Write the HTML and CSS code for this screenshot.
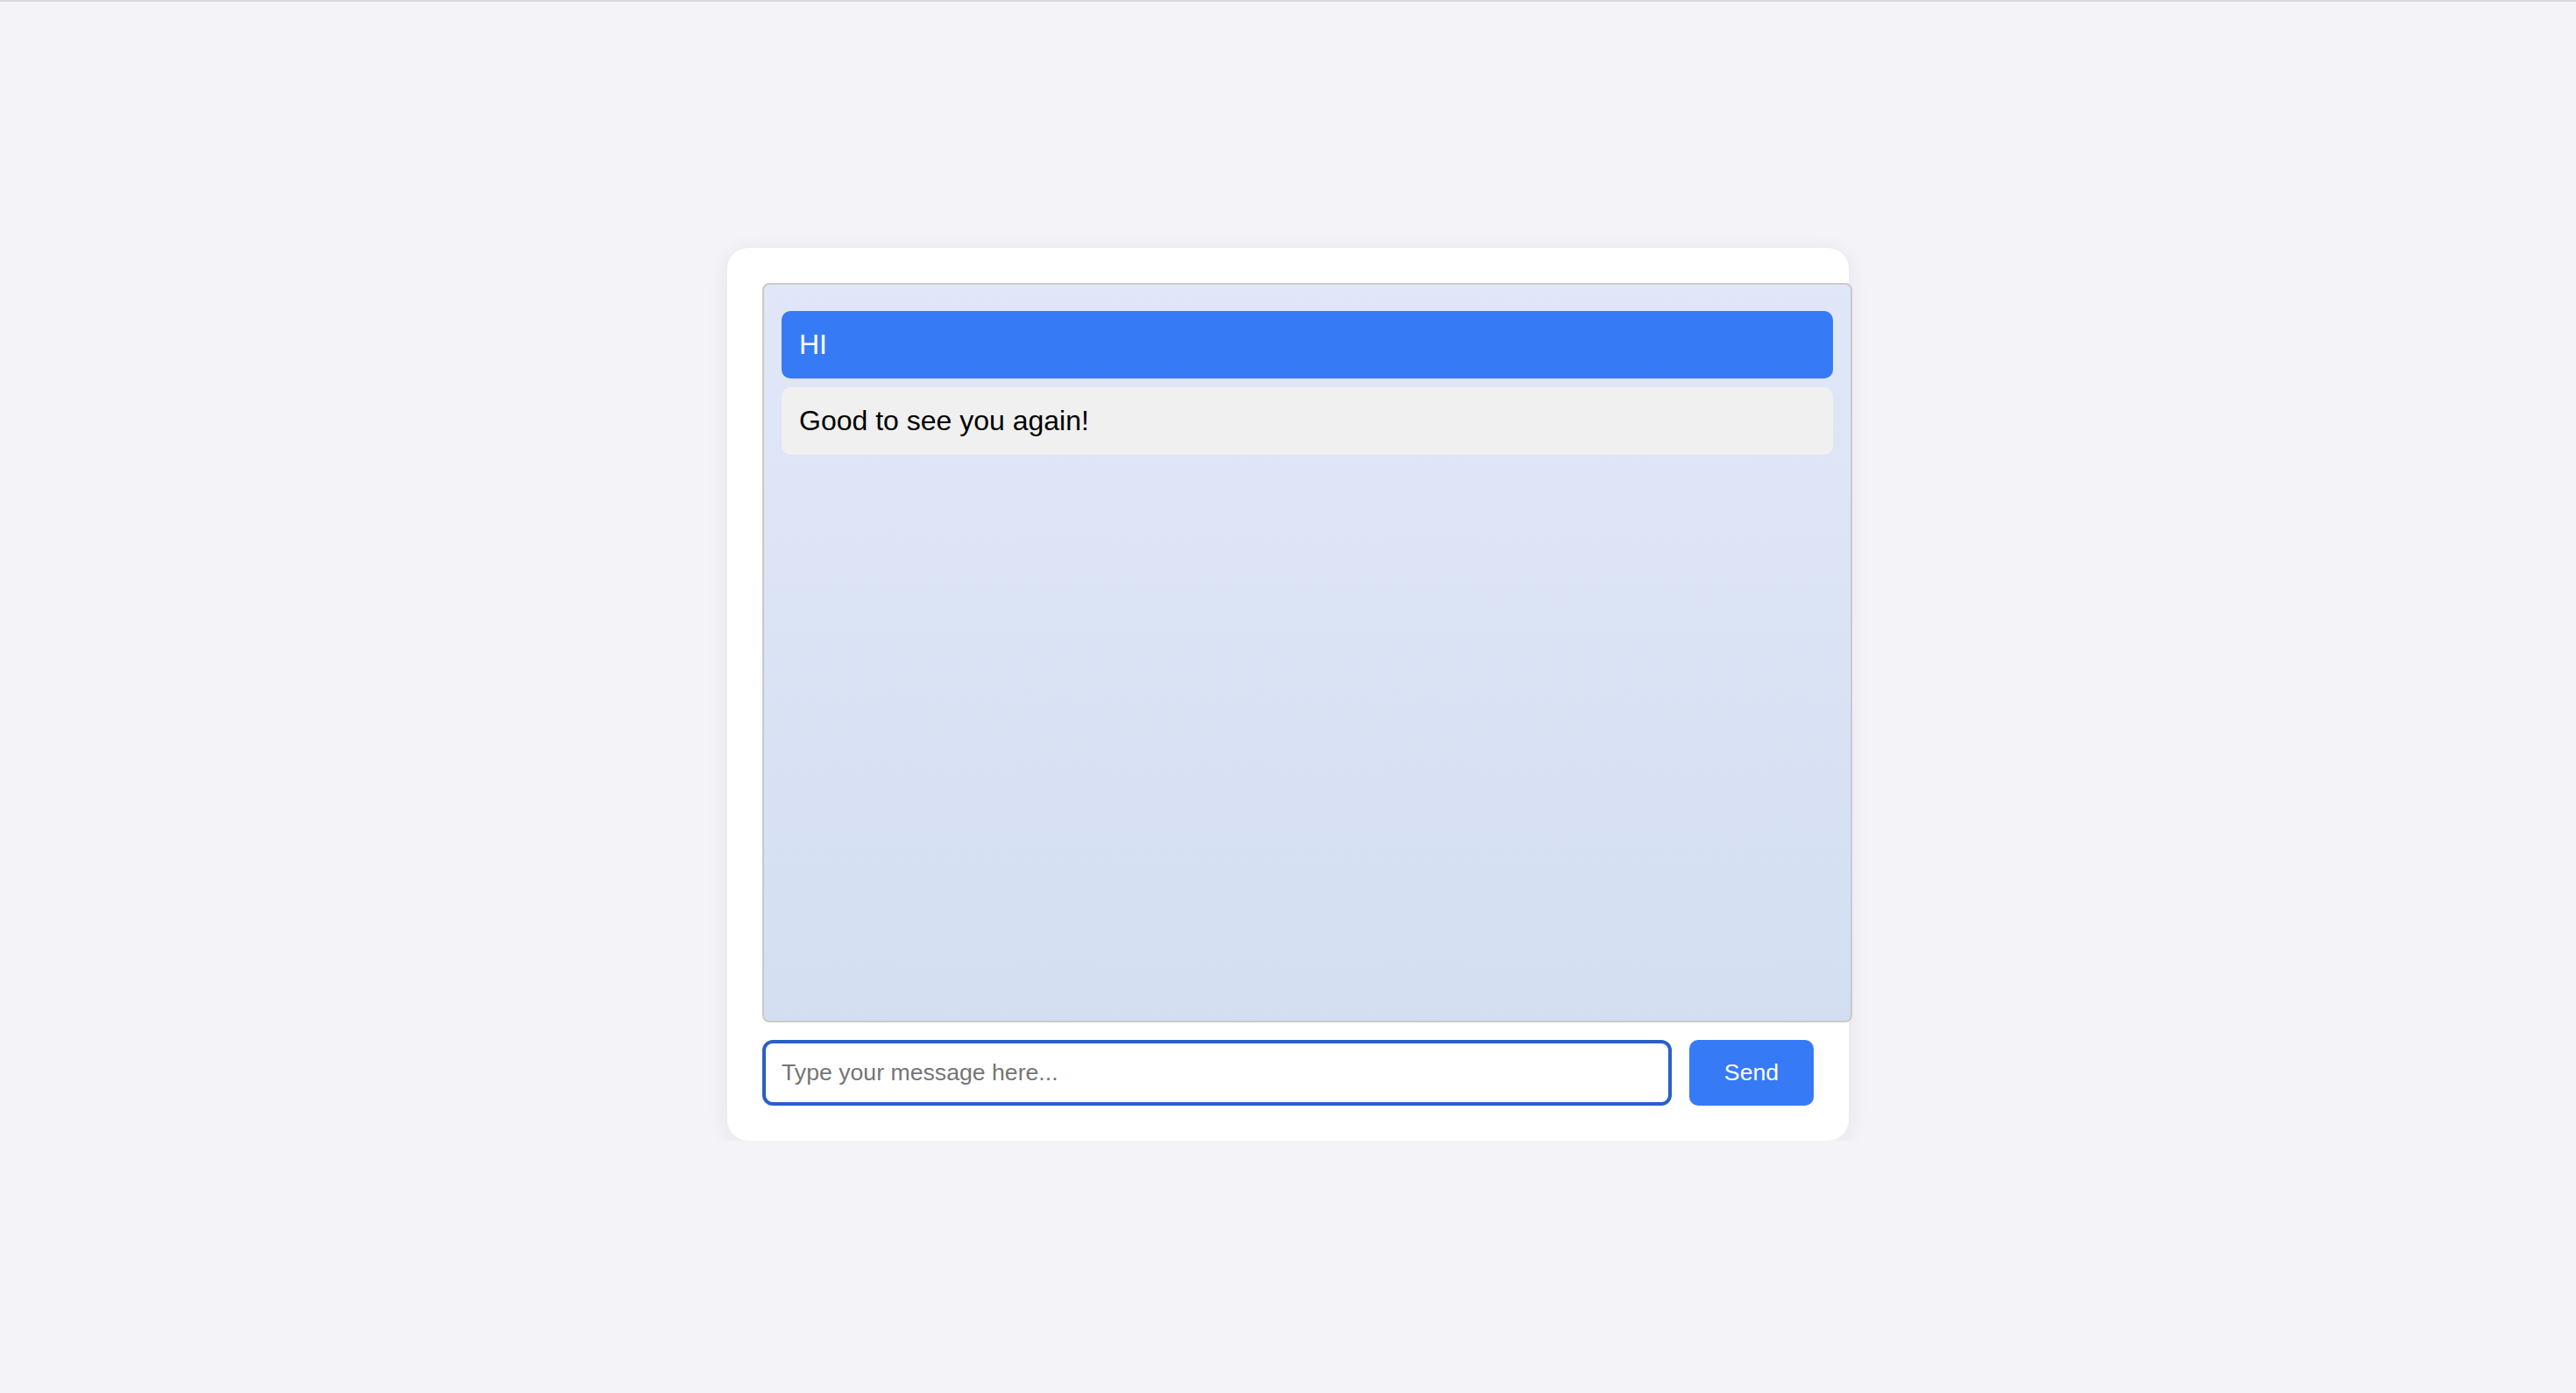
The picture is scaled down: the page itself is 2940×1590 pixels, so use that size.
FILE: index.html
```html
<!DOCTYPE html>
<html lang="en">
<head>
<meta charset="utf-8">
<title>Chat</title>
<link rel="stylesheet" href="styles.css">
</head>
<body>
  <div class="topline"></div>
  <main class="page">
    <section class="card">
      <div class="chat">
        <div class="msg msg-user">HI</div>
        <div class="msg msg-bot">Good to see you again!</div>
      </div>
      <form class="composer">
        <input class="input" type="text" placeholder="Type your message here...">
        <button class="send" type="button">Send</button>
      </form>
    </section>
  </main>
</body>
</html>
```

FILE: styles.css
```css
html, body {
  margin: 0;
  padding: 0;
  background: #f3f3f8;
  font-family: "Liberation Sans", Arial, Helvetica, sans-serif;
}
.topline {
  height: 2px;
  background: #d8d8de;
}
.page {
  display: flex;
  justify-content: center;
  padding-top: 281px;
}
.card {
  width: 1200px;
  padding: 40px;
  background: #ffffff;
  border-radius: 24px;
  box-shadow: 0 4px 24px rgba(40, 40, 80, 0.08);
}
.chat {
  box-sizing: content-box;
  width: 100%;
  height: 790px;
  padding: 30px 20px 20px 20px;
  border: 2px solid #cacaca;
  border-radius: 8px;
  background: linear-gradient(to bottom, #e1e7f8, #d3dff1);
  display: flex;
  flex-direction: column;
  gap: 10px;
}
.msg {
  padding: 20px;
  border-radius: 10px;
  font-size: 32px;
  line-height: 37px;
}
.msg-user {
  background: #367bf5;
  color: #ffffff;
}
.msg-bot {
  background: #f0f0f0;
  color: #000000;
}
.composer {
  display: flex;
  gap: 20px;
  margin: 20px 0 0 0;
}
.input {
  flex: 1;
  box-sizing: border-box;
  height: 75px;
  border: 4px solid #2a5fc9;
  border-radius: 12px;
  padding: 0 18px;
  font-family: "Liberation Sans", Arial, sans-serif;
  font-size: 26.67px;
  color: #000;
  outline: none;
  background: #fff;
}
.input::placeholder {
  color: #757575;
}
.send {
  width: 142px;
  height: 75px;
  border: none;
  border-radius: 10px;
  background: #367bf5;
  color: #ffffff;
  font-family: "Liberation Sans", Arial, sans-serif;
  font-size: 26.67px;
}
```
